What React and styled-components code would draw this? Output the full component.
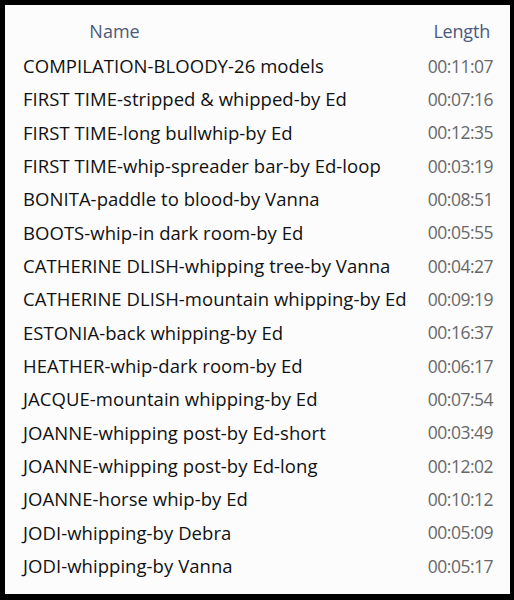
import React from "react";
import styled, { createGlobalStyle } from "styled-components";

const Global = createGlobalStyle`
  html, body { margin: 0; padding: 0; background: #000; }
  body { width: 514px; height: 600px; overflow: hidden; }
`;

const Frame = styled.div`
  width: 514px;
  height: 600px;
  box-sizing: border-box;
  background: #000;
  padding: 5px 4px 6px 5px;
`;

const Panel = styled.div`
  height: 100%;
  background: #fcfcfd;
  font-family: "Open Sans", "Noto Sans", sans-serif;
  box-sizing: border-box;
`;

const Header = styled.div`
  display: flex;
  padding-top: 14px;
  font-size: 18px;
  line-height: 24px;
  color: #4a5a78;
`;

const NameHead = styled.div`
  width: 219px;
  text-align: center;
`;

const LengthHead = styled.div`
  margin-left: auto;
  padding-right: 20px;
  letter-spacing: -0.2px;
`;

const List = styled.div`
  display: grid;
  grid-auto-rows: 33.33px;
  margin-top: 6px;
`;

const Row = styled.div`
  display: flex;
  align-items: center;
  padding: 0 17px 0 18px;
`;

const Title = styled.span`
  color: #111;
  font-size: 18.5px;
  letter-spacing: 0.05px;
`;

const Time = styled.span`
  margin-left: auto;
  color: #686868;
  font-size: 17.5px;
  letter-spacing: -0.5px;
`;

const rows = [
  ["COMPILATION-BLOODY-26 models", "00:11:07"],
  ["FIRST TIME-stripped & whipped-by Ed", "00:07:16"],
  ["FIRST TIME-long bullwhip-by Ed", "00:12:35"],
  ["FIRST TIME-whip-spreader bar-by Ed-loop", "00:03:19"],
  ["BONITA-paddle to blood-by Vanna", "00:08:51"],
  ["BOOTS-whip-in dark room-by Ed", "00:05:55"],
  ["CATHERINE DLISH-whipping tree-by Vanna", "00:04:27"],
  ["CATHERINE DLISH-mountain whipping-by Ed", "00:09:19"],
  ["ESTONIA-back whipping-by Ed", "00:16:37"],
  ["HEATHER-whip-dark room-by Ed", "00:06:17"],
  ["JACQUE-mountain whipping-by Ed", "00:07:54"],
  ["JOANNE-whipping post-by Ed-short", "00:03:49"],
  ["JOANNE-whipping post-by Ed-long", "00:12:02"],
  ["JOANNE-horse whip-by Ed", "00:10:12"],
  ["JODI-whipping-by Debra", "00:05:09"],
  ["JODI-whipping-by Vanna", "00:05:17"],
];

export default function App() {
  return (
    <Frame>
      <Global />
      <Panel>
        <Header>
          <NameHead>Name</NameHead>
          <LengthHead>Length</LengthHead>
        </Header>
        <List>
          {rows.map(([t, d]) => (
            <Row key={t}>
              <Title>{t}</Title>
              <Time>{d}</Time>
            </Row>
          ))}
        </List>
      </Panel>
    </Frame>
  );
}
